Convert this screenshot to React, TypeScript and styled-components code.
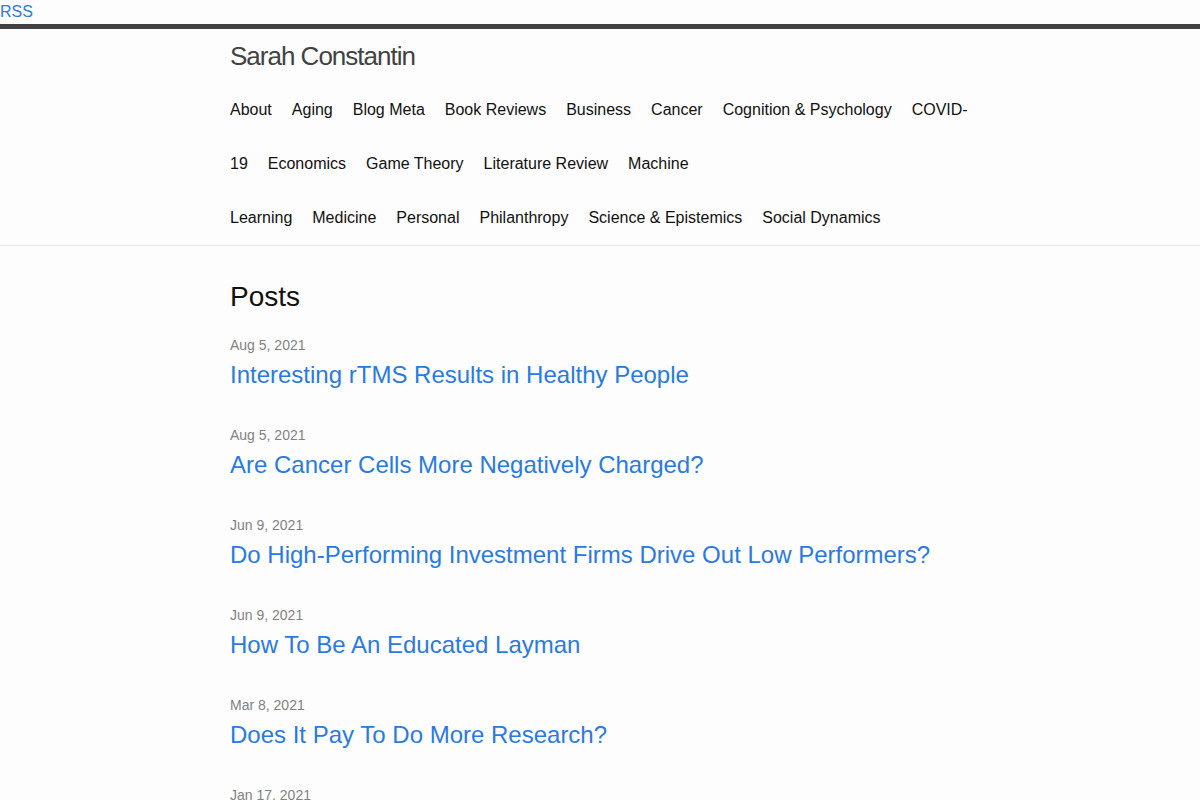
import * as React from 'react';
import styled, { createGlobalStyle } from 'styled-components';

const GlobalStyle = createGlobalStyle`
  html, body {
    margin: 0;
    padding: 0;
  }
  body {
    font-family: 'Liberation Sans', Arial, Helvetica, sans-serif;
    font-size: 16px;
    line-height: 1.5;
    color: #111;
    background: #fdfdfd;
  }
  a {
    text-decoration: none;
    color: #2a7ae2;
  }
`

const categories = [
  'About', 'Aging', 'Blog Meta', 'Book Reviews', 'Business', 'Cancer',
  'Cognition & Psychology', 'COVID-19', 'Economics', 'Game Theory',
  'Literature Review', 'Machine|Learning', 'Medicine', 'Personal',
  'Philanthropy', 'Science & Epistemics', 'Social Dynamics',
]

const posts = [
  { date: 'Aug 5, 2021', title: 'Interesting rTMS Results in Healthy People' },
  { date: 'Aug 5, 2021', title: 'Are Cancer Cells More Negatively Charged?' },
  { date: 'Jun 9, 2021', title: 'Do High-Performing Investment Firms Drive Out Low Performers?' },
  { date: 'Jun 9, 2021', title: 'How To Be An Educated Layman' },
  { date: 'Mar 8, 2021', title: 'Does It Pay To Do More Research?' },
  { date: 'Jan 17, 2021', title: 'Playing With Reality' },
]

const RssLink = styled.a`
  display: block;
  font-size: 16px;
  line-height: 24px;
`

const Wrapper = styled.div`
  max-width: 740px;
  margin: 0 auto;
  padding: 0 30px;
`

const SiteHeader = styled.header`
  border-top: 5px solid #424242;
  border-bottom: 1px solid #e8e8e8;
`

const SiteTitle = styled.a`
  display: block;
  font-size: 26px;
  font-weight: 300;
  line-height: 54px;
  letter-spacing: -1px;
  color: #424242;
`

const SiteNav = styled.nav`
  line-height: 54px;
`

const PageLink = styled.a`
  color: #111;
  line-height: 1.5;
  &:not(:last-child) {
    margin-right: 20px;
  }
`

const PageContent = styled.main`
  padding: 30px 0;
`

const Heading = styled.h1`
  font-size: 28px;
  font-weight: 400;
  line-height: 42px;
  margin: 0 0 15px;
`

const PostList = styled.ul`
  list-style: none;
  margin: 0;
  padding: 0;
`

const PostItem = styled.li`
  margin-bottom: 30px;
`

const PostMeta = styled.span`
  font-size: 14px;
  color: #828282;
`

const PostTitle = styled.h3`
  margin: 0;
  font-size: 24px;
  font-weight: 400;
  line-height: 36px;
`

const NavLabel = ({ label }: { label: string }) => {
  const [first, second] = label.split('|')
  return second ? <>{first}<br />{second}</> : <>{first}</>
}

const App = () => (
  <>
    <GlobalStyle />
    <RssLink href="#">RSS</RssLink>
    <SiteHeader>
      <Wrapper>
        <SiteTitle href="#">Sarah Constantin</SiteTitle>
        <SiteNav>
          {categories.map(c => (
            <PageLink href="#" key={c}><NavLabel label={c} /></PageLink>
          ))}
        </SiteNav>
      </Wrapper>
    </SiteHeader>
    <PageContent>
      <Wrapper>
        <Heading>Posts</Heading>
        <PostList>
          {posts.map(p => (
            <PostItem key={p.title}>
              <PostMeta>{p.date}</PostMeta>
              <PostTitle><a href="#">{p.title}</a></PostTitle>
            </PostItem>
          ))}
        </PostList>
      </Wrapper>
    </PageContent>
  </>
)

export default App;
